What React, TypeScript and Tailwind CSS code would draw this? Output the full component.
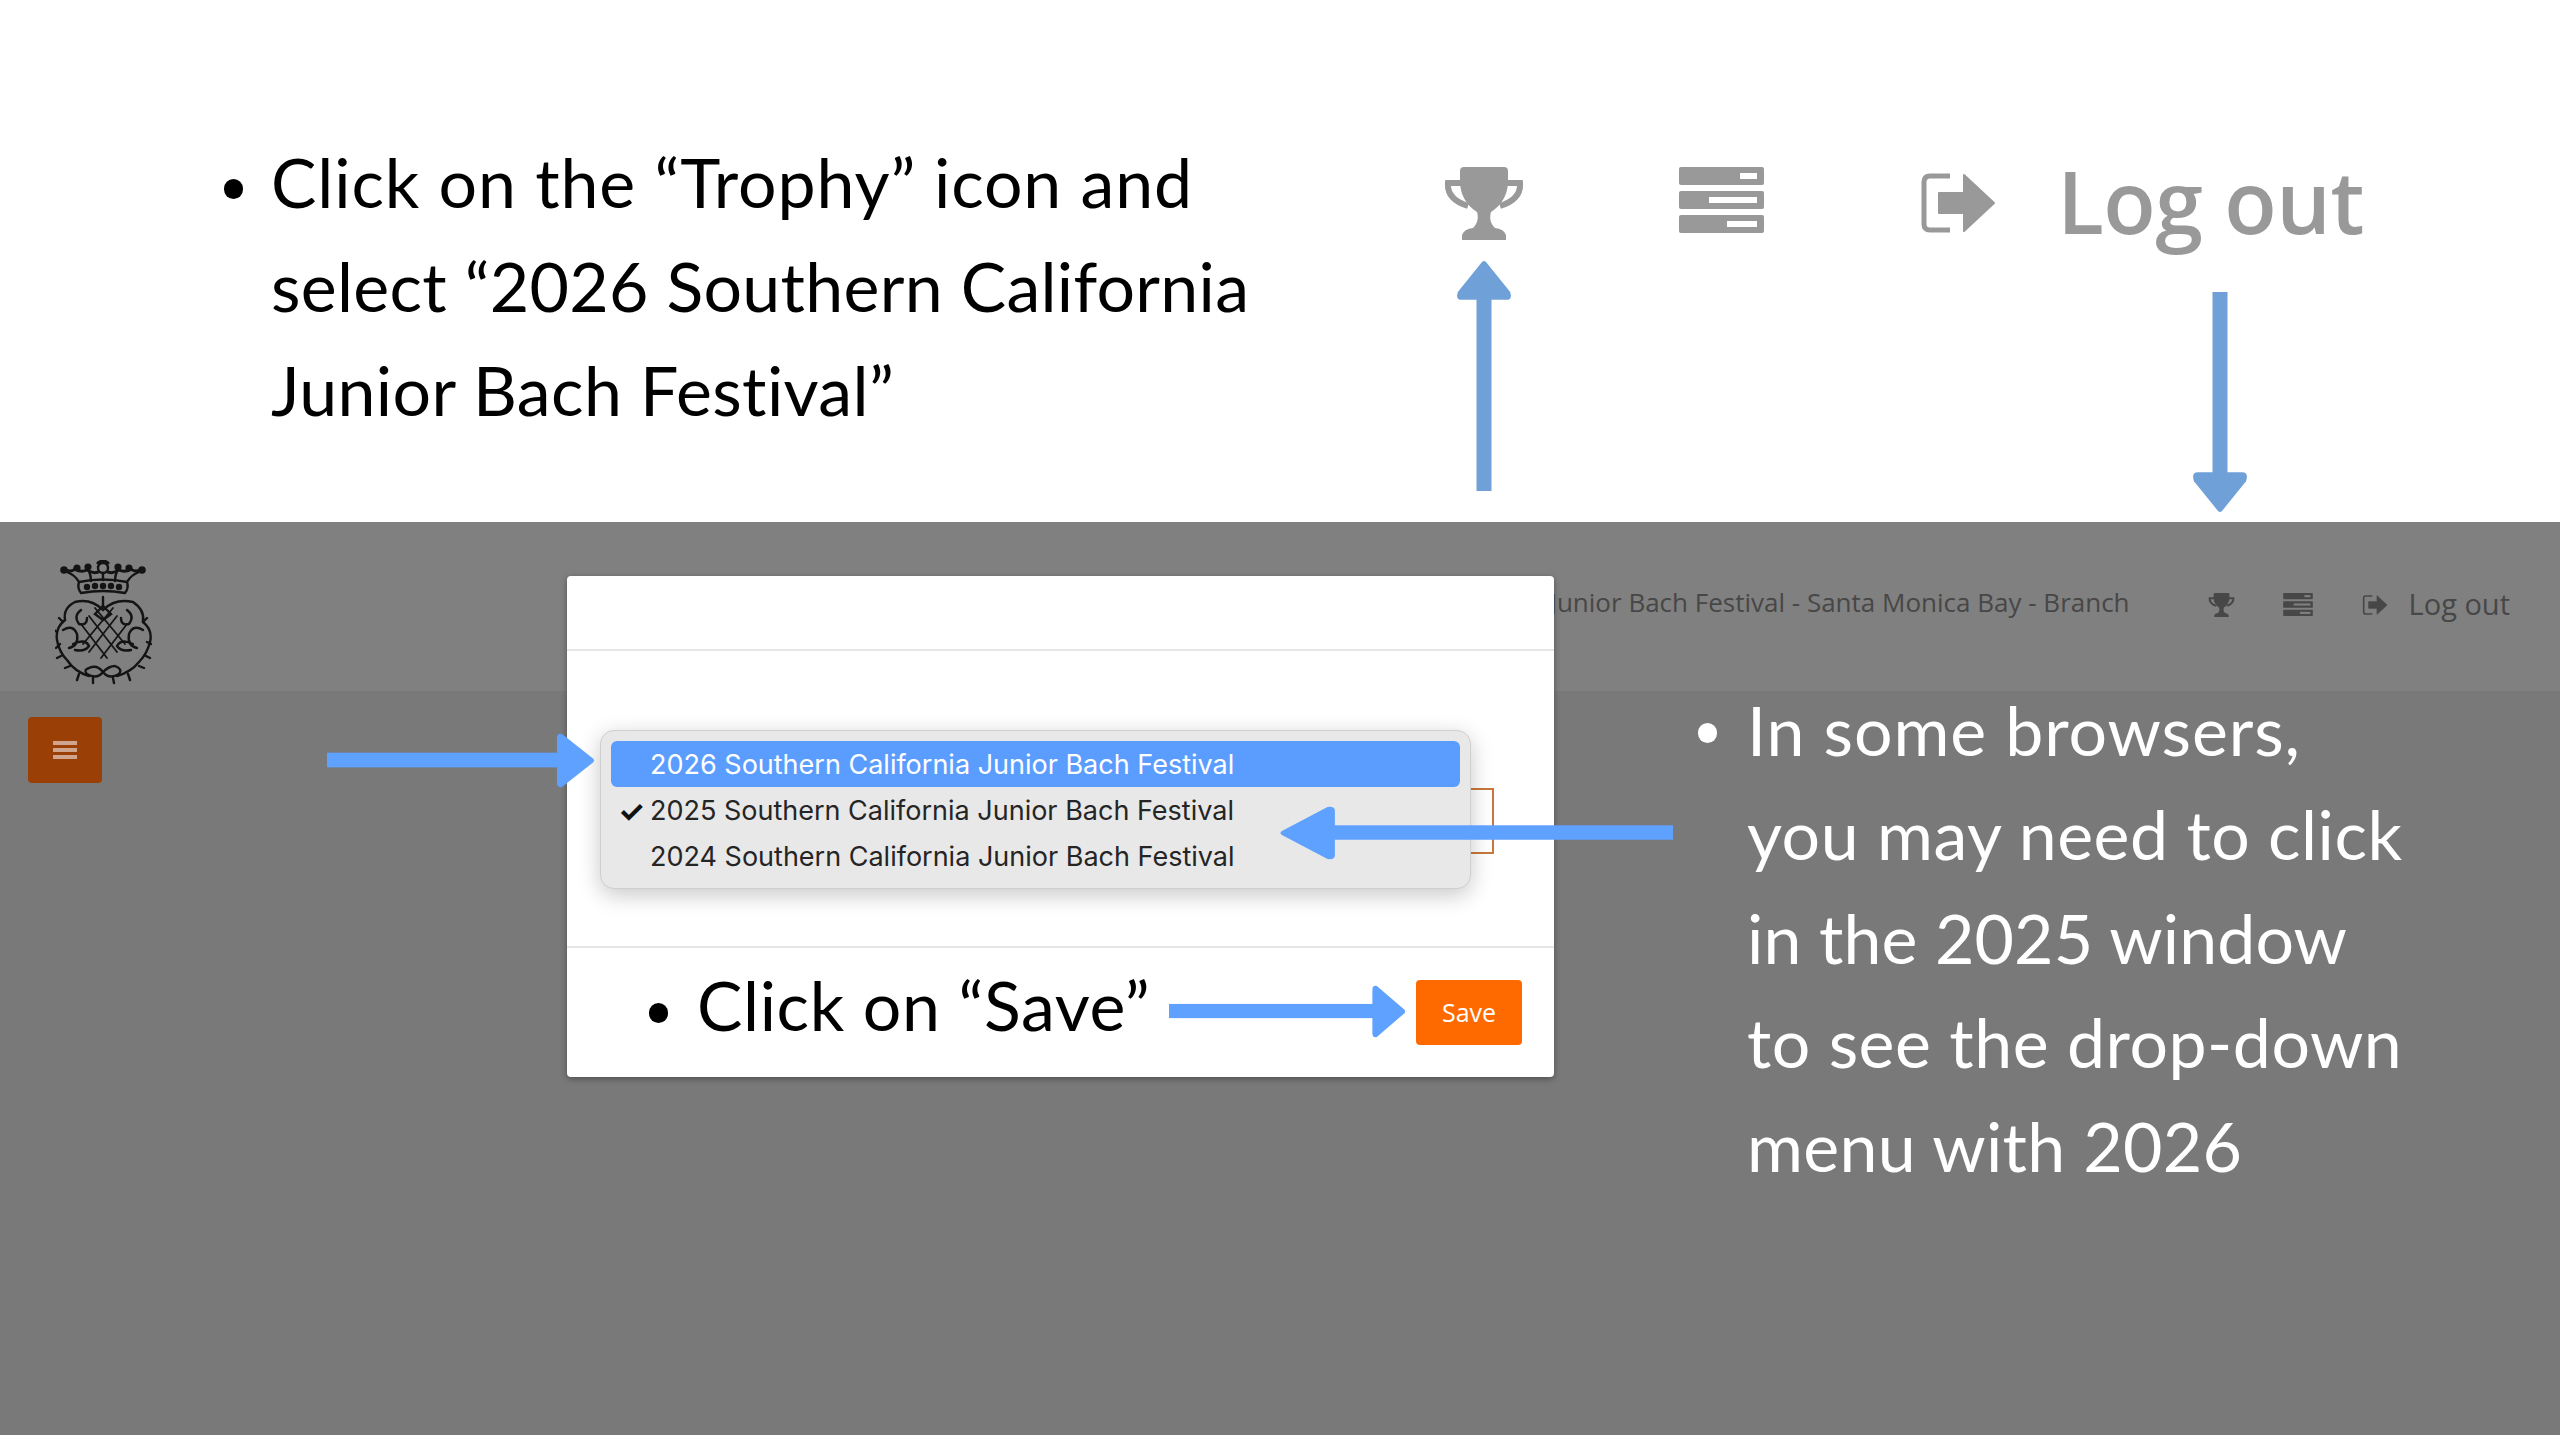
import React from "react";

const lato = "font-['Lato','Liberation_Sans',sans-serif] [font-variant-ligatures:none]";
const openSans = "font-['Open_Sans','Liberation_Sans',sans-serif]";

const Trophy = ({ className }: { className: string }) => (
  <svg viewBox="0 0 80 73" className={className}>
    <path
      fill="currentColor"
      d="M20 0H60Q64 0 64 4V14C64 32 53 41 47 45C45 52 47 57 51 61Q60 62 62 68V73H18V68Q20 62 29 61C33 57 35 52 33 45C27 41 16 32 16 14V4Q16 0 20 0Z"
    />
    <path
      fill="none"
      stroke="currentColor"
      strokeWidth="6"
      d="M17 16H4C3 28 11 35 24 39M63 16H76C77 28 69 35 56 39"
    />
  </svg>
);

const Tasks = ({ className, hole }: { className: string; hole: string }) => (
  <svg viewBox="0 0 85 66" className={className}>
    <rect width="85" height="18" rx="2" fill="currentColor" />
    <rect y="24" width="85" height="18" rx="2" fill="currentColor" />
    <rect y="48" width="85" height="18" rx="2" fill="currentColor" />
    <rect x="61" y="6" width="17" height="6" fill={hole} />
    <rect x="30" y="30" width="48" height="6" fill={hole} />
    <rect x="48" y="54" width="30" height="6" fill={hole} />
  </svg>
);

const LogOut = ({ className }: { className: string }) => (
  <svg viewBox="0 0 74 60" className={className}>
    <path
      fill="none"
      stroke="currentColor"
      strokeWidth="5"
      d="M29 3H9Q3 3 3 9V51Q3 57 9 57H29"
    />
    <path
      fill="currentColor"
      stroke="currentColor"
      strokeWidth="2"
      strokeLinejoin="round"
      d="M18 20H43V2L73 30L43 58V40H18Z"
    />
  </svg>
);

// seal in the header, drawn by hand
const Crest = () => (
  <svg
    viewBox="0 0 97 125"
    className="w-[97px] h-[125px] text-[#141414] blur-[0.6px]"
    fill="none"
    stroke="currentColor"
    strokeWidth="2.4"
    strokeLinecap="round"
  >
    <circle cx="48" cy="8" r="5" />
    <path d="M43 3Q48 -1 53 3M8 9Q16 13 20 9Q26 13 32 10Q38 14 43 12M88 9Q80 13 76 9Q70 13 64 10Q58 14 53 12" strokeWidth="3" />
    <path d="M12 12Q20 15 24 22M84 12Q76 15 72 22M34 11Q36 16 36 21M62 11Q60 16 60 21M48 13V20" />
    <circle cx="22" cy="8" r="2.4" fill="currentColor" />
    <circle cx="33" cy="7" r="2.4" fill="currentColor" />
    <circle cx="63" cy="7" r="2.4" fill="currentColor" />
    <circle cx="74" cy="8" r="2.4" fill="currentColor" />
    <circle cx="9" cy="10" r="2.6" fill="currentColor" />
    <circle cx="87" cy="10" r="2.6" fill="currentColor" />
    <path d="M24 22Q48 17 72 22Q74 28 70 33Q48 29 26 33Q22 28 24 22Z" />
    <circle cx="32" cy="27" r="2" fill="currentColor" />
    <circle cx="40" cy="26" r="2" fill="currentColor" />
    <circle cx="48" cy="26" r="2" fill="currentColor" />
    <circle cx="56" cy="26" r="2" fill="currentColor" />
    <circle cx="64" cy="27" r="2" fill="currentColor" />
    <path d="M48 37V46M20 42Q36 38 48 50Q60 38 78 42Q90 50 88 62M20 42Q8 48 10 60" />
    <path d="M10 60Q0 68 2 80Q4 92 12 100Q20 112 34 116M88 62Q98 70 95 82Q92 94 84 102Q76 112 62 116" />
    <path d="M26 50Q18 56 24 64Q32 66 32 58M72 50Q80 56 74 64Q66 66 66 58" />
    <path d="M34 56L62 92M62 56L34 92M26 64L52 98M72 64L46 98M40 48L70 84M58 48L28 84" strokeWidth="1.8" />
    <path d="M48 46L56 54L48 60L40 54Z" />
    <path d="M8 70Q18 64 22 74Q24 86 14 88M88 70Q78 64 74 74Q72 86 82 88" />
    <path d="M18 84Q30 78 34 86Q30 92 20 90M78 84Q66 78 62 86Q66 92 76 90" />
    <path d="M34 108Q42 104 48 112Q54 120 64 114Q68 109 60 106Q54 106 48 112Q42 120 32 114Q28 110 34 108Z" />
    <path d="M2 72L-1 70M1 88L5 84M6 96L2 98M15 106L10 108M24 114L22 120M38 118L38 123M58 118L59 123M73 114L75 120M84 106L89 108M91 96L95 98M96 84L92 82M4 58L8 62M92 58L88 62" />
  </svg>
);

const Bullet = ({ className }: { className: string }) => (
  <span className={`block rounded-full shrink-0 w-[19px] h-[20px] ${className}`} />
);

type Dir = "up" | "down" | "left" | "right";

const ArrowShape = ({ dir, fill }: { dir: Dir; fill: string }) => {
  if (dir === "right")
    return (
      <svg viewBox="0 0 268 56" preserveAspectRatio="none" className="w-full h-full">
        <rect y="20" width="232" height="15" fill={fill} />
        <path d="M230 5Q230 0 235 1L266 26Q268 28 266 30L235 55Q230 56 230 51Z" fill={fill} />
      </svg>
    );
  if (dir === "left")
    return (
      <svg viewBox="0 0 268 56" preserveAspectRatio="none" className="w-full h-full">
        <rect x="36" y="20" width="232" height="15" fill={fill} />
        <path d="M38 5Q38 0 33 1L2 26Q0 28 2 30L33 55Q38 56 38 51Z" fill={fill} />
      </svg>
    );
  if (dir === "up")
    return (
      <svg viewBox="0 0 56 232" preserveAspectRatio="none" className="w-full h-full">
        <rect x="20.5" y="38" width="15" height="194" fill={fill} />
        <path d="M26 2Q28 0 30 2L54 32Q57 40 50 40H6Q-1 40 2 32Z" fill={fill} />
      </svg>
    );
  return (
    <svg viewBox="0 0 56 222" preserveAspectRatio="none" className="w-full h-full">
      <rect x="20.5" width="15" height="184" fill={fill} />
      <path d="M26 220Q28 222 30 220L54 190Q57 181 50 181H6Q-1 181 2 190Z" fill={fill} />
    </svg>
  );
};

const Arrow = ({ className, dir, fill }: { className: string; dir: Dir; fill: string }) => (
  <div className={`absolute ${className}`}>
    <ArrowShape dir={dir} fill={fill} />
  </div>
);

const options = [
  "2026 Southern California Junior Bach Festival",
  "2025 Southern California Junior Bach Festival",
  "2024 Southern California Junior Bach Festival",
];

export default function App() {
  return (
    <div className={`relative w-[2560px] h-[1440px] bg-white overflow-hidden ${lato}`}>
      {/* top instructions */}
      <section className="flex h-[522px]">
        <div className="flex ml-[224px] mt-[130px] text-[68px] leading-[104px] text-black">
          <Bullet className="bg-black mt-[49px] mr-[28px]" />
          <p className="w-[1050px]">
            <span className="block tracking-[0.9px]">Click on the “Trophy” icon and</span>
            <span className="block tracking-[0.3px]">select “2026 Southern California</span>
            <span className="block tracking-[0.4px]">Junior Bach Festival”</span>
          </p>
        </div>
        <div className="flex items-start ml-auto mr-[196px] pt-[167px] text-[#999999]">
          <Trophy className="w-[80px] h-[73px]" />
          <Tasks className="w-[85px] h-[66px] ml-[155px]" hole="#ffffff" />
          <LogOut className="w-[74px] h-[60px] mt-[6px] ml-[157px]" />
          <span className={`${openSans} ml-[62px] -mt-[9px] text-[86px] tracking-[-0.5px] leading-none font-semibold`}>
            Log out
          </span>
        </div>
      </section>

      {/* dimmed page */}
      <section className="h-[913px] bg-[#797979]">
        <header className={`flex items-start h-[169px] bg-[#808080] text-[#474747] ${openSans}`}>
          <div className="ml-[55px] mt-[38px]">
            <Crest />
          </div>
          <div className="flex items-start ml-auto mr-[50px] pt-[67px]">
            <span className="text-[26px] leading-none">Junior Bach Festival - Santa Monica Bay - Branch</span>
            <Trophy className="w-[29px] h-[24px] mt-[4px] ml-[77px]" />
            <Tasks className="w-[30px] h-[23px] mt-[4px] ml-[47px]" hole="#808080" />
            <LogOut className="w-[26px] h-[20px] mt-[6px] ml-[49px]" />
            <span className="ml-[21px] text-[29px] leading-none font-medium">Log out</span>
          </div>
        </header>

        <div className="flex items-start">
          <button className="flex flex-col gap-[3px] items-center justify-center w-[74px] h-[66px] ml-[28px] mt-[26px] rounded-[4px] bg-[#9a3f05]">
            <span className="block w-[24px] h-[4px] bg-[#cfa68d]" />
            <span className="block w-[24px] h-[4px] bg-[#cfa68d]" />
            <span className="block w-[24px] h-[4px] bg-[#cfa68d]" />
          </button>
          <div className="flex ml-auto mr-[130px] -mt-[13px] text-[68px] leading-[104px] text-white">
            <Bullet className="bg-white mt-[45px] mr-[30px]" />
            <p className="w-[683px]">
              <span className="block tracking-[0.9px]">In some browsers,</span>
              <span className="block tracking-[0.5px]">you may need to click</span>
              <span className="block tracking-[0.1px]">in the 2025 window</span>
              <span className="block tracking-[0.5px]">to see the drop-down</span>
              <span className="block tracking-[0.3px]">menu with 2026</span>
            </p>
          </div>
        </div>
      </section>

      {/* modal over the page */}
      <div className="absolute left-[567px] top-[576px] w-[987px] h-[501px] flex flex-col bg-white rounded-[4px] shadow-[0_2px_6px_rgba(0,0,0,0.35)]">
        <div className="h-[75px] shrink-0 border-b-2 border-[#e6e6e6]" />
        <div className="relative flex-1">
          <div className="ml-[321px] mt-[137px] w-[606px] h-[66px] border-2 border-[#c9773a]" />
          <div className="absolute left-[33px] top-[79px] w-[871px] h-[159px] px-[10px] py-[10px] rounded-[14px] bg-[#e8e8e8] border border-[#cfcfcf] shadow-[0_6px_22px_rgba(0,0,0,0.22)] font-['Inter','Liberation_Sans',sans-serif] text-[27px] text-[#252525]">
            {options.map((label, i) => (
              <div
                key={label}
                className={`relative flex items-center h-[46px] pl-[39px] pt-[2px] rounded-[6px] ${
                  i === 0 ? "bg-[#5b9dff] text-white" : ""
                }`}
              >
                {i === 1 && <span className="absolute left-[7px] text-[30px] font-bold text-[#111]">✓</span>}
                {label}
              </div>
            ))}
          </div>
        </div>
        <div className="flex items-center h-[131px] shrink-0 border-t-2 border-[#e6e6e6] text-[68px] text-black">
          <Bullet className="bg-black ml-[82px] mr-[29px]" />
          <span className="-mt-[16px] tracking-[0.6px]">Click on “Save”</span>
          <button className={`ml-auto mr-[32px] w-[106px] h-[65px] rounded-[4px] bg-[#ff6a00] text-white text-[25px] ${openSans}`}>
            Save
          </button>
        </div>
      </div>

      {/* annotation arrows */}
      <Arrow className="left-[1456px] top-[260px] w-[56px] h-[231px]" dir="up" fill="#6fa0d8" />
      <Arrow className="left-[2192px] top-[292px] w-[56px] h-[221px]" dir="down" fill="#6fa0d8" />
      <Arrow className="left-[327px] top-[733px] w-[268px] h-[55px]" dir="right" fill="#5fa1ff" />
      <Arrow className="left-[1279px] top-[806px] w-[394px] h-[54px]" dir="left" fill="#5fa1ff" />
      <Arrow className="left-[1169px] top-[985px] w-[237px] h-[53px]" dir="right" fill="#5fa1ff" />

      <div className="absolute left-0 right-0 top-[1435px] h-[5px] bg-white" />
    </div>
  );
}
